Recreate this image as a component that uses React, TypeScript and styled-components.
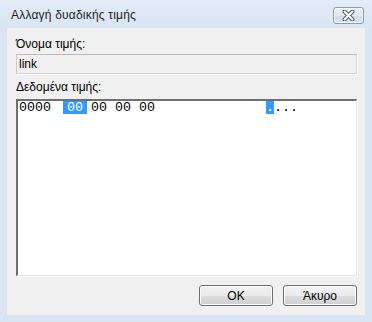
import React, { FC } from 'react';
import styled, { createGlobalStyle } from 'styled-components';

const GlobalStyle = createGlobalStyle`
    html, body {
        margin: 0;
        padding: 0;
        background: #dae6f3;
    }
    body {
        font-family: "Liberation Sans", Arial, sans-serif;
        font-size: 12px;
        color: #000;
    }
`;

const Window = styled.div`
    width: 372px;
    height: 322px;
    box-sizing: border-box;
    display: flex;
    flex-direction: column;
    background: linear-gradient(to bottom, #e3ecf7 0px, #d9e5f3 28px, #d9e5f3 100%);
`;

const TitleBar = styled.div`
    height: 28px;
    display: flex;
    align-items: center;
    justify-content: space-between;
    padding: 0 8px 0 11px;
`;

const Title = styled.span`
    font-size: 12px;
    letter-spacing: 0.2px;
    color: #1e1e1e;
    margin-top: 2px;
`;

const CloseButton = styled.div`
    width: 31px;
    height: 17px;
    margin-top: 2px;
    box-sizing: border-box;
    display: flex;
    align-items: center;
    justify-content: center;
    border: 1px solid #8d9cb1;
    border-radius: 3px;
    background: linear-gradient(to bottom, #eef3f9 0%, #dfe7f1 50%, #d3dde9 51%, #dbe4ef 100%);
    box-shadow: inset 0 0 0 1px rgba(255, 255, 255, 0.6);
`;

const Client = styled.div`
    flex: 1;
    margin: 0 7px 7px 7px;
    background: #f0f0f0;
    padding: 9px 8px 9px 9px;
    display: flex;
    flex-direction: column;
`;

const Label = styled.div<{ $gap?: number }>`
    line-height: 15px;
    margin-bottom: ${(p) => p.$gap ?? 2}px;
`;

const ReadonlyField = styled.div`
    height: 20px;
    box-sizing: border-box;
    border: 1px solid #d4d4d4;
    border-top-color: #b9b9b9;
    border-left-color: #c9c9c9;
    box-shadow: 1px 1px 0 #ffffff;
    background: #f0f0f0;
    padding: 0 2px;
    line-height: 18px;
    margin-bottom: 6px;
`;

const HexBox = styled.div`
    height: 177px;
    box-sizing: border-box;
    background: #fff;
    border-top: 2px solid #6f6f6f;
    border-left: 2px solid #6f6f6f;
    border-right: 1px solid #e3e3e3;
    border-bottom: 1px solid #e3e3e3;
    box-shadow: 1px 1px 0 #ffffff;
    padding: 0 1px;
    font-family: "Liberation Mono", "DejaVu Sans Mono", monospace;
    font-size: 13.333px;
    line-height: 13px;
`;

const HexRow = styled.div`
    display: flex;
    height: 13px;
`;

const Offset = styled.span`
    width: 32px;
    margin-right: 12px;
`;

const ByteCell = styled.span<{ $selected?: boolean }>`
    width: 24px;
    text-align: center;
    background: ${(p) => (p.$selected ? '#3399ff' : 'transparent')};
    color: ${(p) => (p.$selected ? '#fff' : '#000')};
`;

const AsciiArea = styled.span`
    display: flex;
    margin-left: 107px;
`;

const CharCell = styled.span<{ $selected?: boolean }>`
    width: 8px;
    text-align: center;
    background: ${(p) => (p.$selected ? '#3399ff' : 'transparent')};
    color: ${(p) => (p.$selected ? '#fff' : '#000')};
`;

const Footer = styled.div`
    display: flex;
    justify-content: flex-end;
    gap: 10px;
    margin-top: 9px;
`;

const Button = styled.div`
    width: 74px;
    height: 21px;
    box-sizing: border-box;
    border: 1px solid #707070;
    border-radius: 3px;
    background: linear-gradient(to bottom, #f2f2f2 0%, #ebebeb 50%, #dddddd 51%, #cfcfcf 100%);
    box-shadow: inset 0 0 0 1px #fcfcfc;
    display: flex;
    align-items: center;
    justify-content: center;
    font-size: 12px;
`;

const Spacer = styled.div`
    flex: 1;
`;

const CloseIcon: FC = () => (
    <svg width="13" height="11" viewBox="0 0 13 11">
        <path d="M2.5 1.5 L10.5 9.5 M10.5 1.5 L2.5 9.5" stroke="#4b5a6e" strokeWidth="4" strokeLinecap="round" />
        <path d="M2.5 1.5 L10.5 9.5 M10.5 1.5 L2.5 9.5" stroke="#ffffff" strokeWidth="2" strokeLinecap="round" />
    </svg>
);

const App: FC = () => {
    const bytes = ['00', '00', '00', '00'];
    return (
        <>
            <GlobalStyle />
            <Window>
                <TitleBar>
                    <Title>Αλλαγή δυαδικής τιμής</Title>
                    <CloseButton>
                        <CloseIcon />
                    </CloseButton>
                </TitleBar>
                <Client>
                    <Label>Όνομα τιμής:</Label>
                    <ReadonlyField>link</ReadonlyField>
                    <Label $gap={4}>Δεδομένα τιμής:</Label>
                    <HexBox>
                        <HexRow>
                            <Offset>0000</Offset>
                            {bytes.map((b, i) => (
                                <ByteCell key={i} $selected={i === 0}>
                                    {b}
                                </ByteCell>
                            ))}
                            <AsciiArea>
                                {bytes.map((_, i) => (
                                    <CharCell key={i} $selected={i === 0}>
                                        .
                                    </CharCell>
                                ))}
                            </AsciiArea>
                        </HexRow>
                    </HexBox>
                    <Spacer />
                    <Footer>
                        <Button>OK</Button>
                        <Button>Άκυρο</Button>
                    </Footer>
                </Client>
            </Window>
        </>
    );
};

export default App;
